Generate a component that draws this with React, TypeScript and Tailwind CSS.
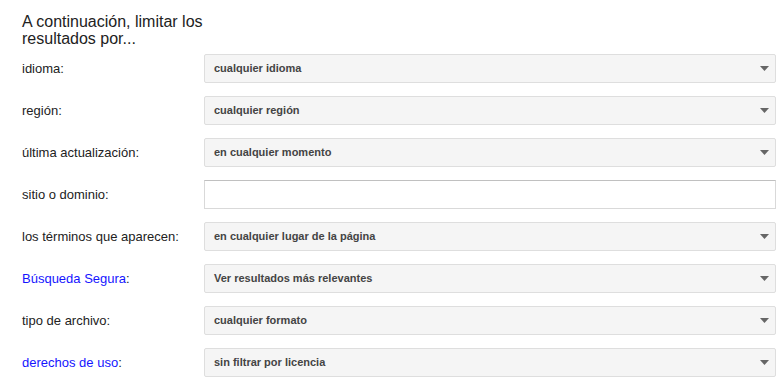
const rows: { label: string; value?: string; link?: boolean }[] = [
  { label: "idioma", value: "cualquier idioma" },
  { label: "región", value: "cualquier región" },
  { label: "última actualización", value: "en cualquier momento" },
  { label: "sitio o dominio" },
  { label: "los términos que aparecen", value: "en cualquier lugar de la página" },
  { label: "Búsqueda Segura", value: "Ver resultados más relevantes", link: true },
  { label: "tipo de archivo", value: "cualquier formato" },
  { label: "derechos de uso", value: "sin filtrar por licencia", link: true },
];

export default function App() {
  return (
    <div className="h-[391px] w-[784px] overflow-hidden bg-white pl-[22px] pt-[13px] font-['Liberation_Sans',Arial,sans-serif] text-[#222]">
      <h1 className="w-[200px] text-[16px] leading-[17px] font-normal">A continuación, limitar los resultados por...</h1>
      <div className="mt-[7px] flex flex-col gap-[13px]">
        {rows.map((row) => (
          <div key={row.label} className="flex h-[29px] items-center">
            <div className="w-[182px] shrink-0 text-[13px]">
              {row.link ? <span className="text-[#1515ff]">{row.label}</span> : row.label}:
            </div>
            {row.value ? <Dropdown value={row.value} /> : <TextBox />}
          </div>
        ))}
      </div>
    </div>
  );
}

function Dropdown({ value }: { value: string }) {
  return (
    <div className="flex h-[29px] w-[572px] items-center justify-between rounded-[2px] border border-[#dedede] bg-[#f5f5f5] pl-[9px] pr-[5px]">
      <span className="text-[11px] font-bold text-[#444]">{value}</span>
      <svg width="9" height="5" viewBox="0 0 9 5" className="mr-[1px]">
        <path d="M0 0h9L4.5 5z" fill="#666" />
      </svg>
    </div>
  );
}

function TextBox() {
  return <div className="h-[29px] w-[572px] border border-[#d9d9d9] border-t-[#c0c0c0] bg-white" />;
}
